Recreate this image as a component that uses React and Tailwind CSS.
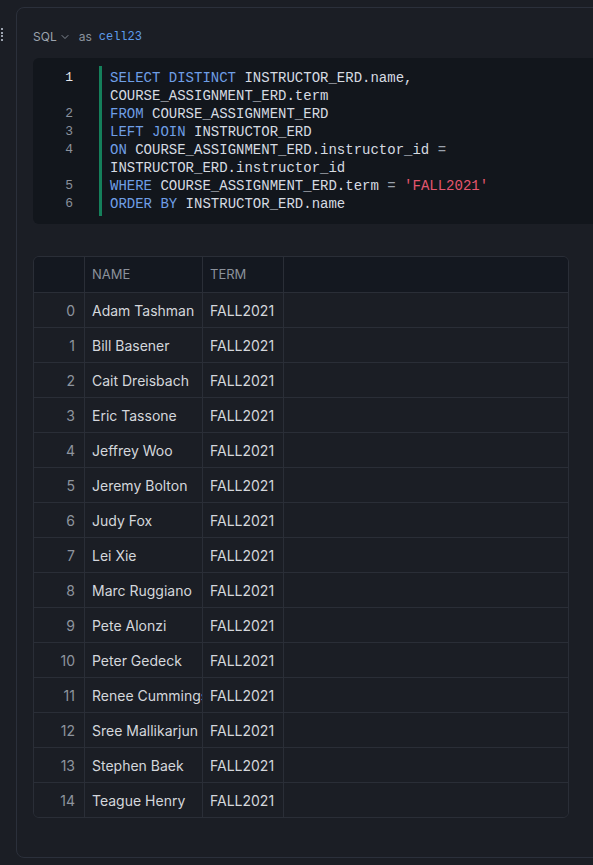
import { ChevronDown } from 'lucide-react'

const ROWS = [
  'Adam Tashman', 'Bill Basener', 'Cait Dreisbach', 'Eric Tassone', 'Jeffrey Woo',
  'Jeremy Bolton', 'Judy Fox', 'Lei Xie', 'Marc Ruggiano', 'Pete Alonzi',
  'Peter Gedeck', 'Renee Cummings', 'Sree Mallikarjun', 'Stephen Baek', 'Teague Henry',
]

const K = ({ children }) => <span className="text-[#6f9fe6]">{children}</span>

// each entry is one visual line; num is shown only on the first line of a statement
const CODE = [
  { num: 1, body: <><K>SELECT DISTINCT</K> INSTRUCTOR_ERD.name,</> },
  { num: null, body: <>COURSE_ASSIGNMENT_ERD.term</> },
  { num: 2, body: <><K>FROM</K> COURSE_ASSIGNMENT_ERD</> },
  { num: 3, body: <><K>LEFT JOIN</K> INSTRUCTOR_ERD</> },
  { num: 4, body: <><K>ON</K> COURSE_ASSIGNMENT_ERD.instructor_id <span className="text-[#9aa2ad]">=</span></> },
  { num: null, body: <>INSTRUCTOR_ERD.instructor_id</> },
  { num: 5, body: <><K>WHERE</K> COURSE_ASSIGNMENT_ERD.term <span className="text-[#9aa2ad]">=</span> <span className="text-[#e5566f]">'FALL2021'</span></> },
  { num: 6, body: <><K>ORDER BY</K> INSTRUCTOR_ERD.name</> },
]

const sans = { fontFamily: 'Inter, "Noto Sans", sans-serif' }
const mono = { fontFamily: '"Liberation Mono", "DejaVu Sans Mono", monospace' }

export default function App() {
  return (
    <div className="w-full h-[865px] bg-[#1b1e25] overflow-hidden relative" style={sans}>
      {/* drag handle */}
      <div className="absolute left-[1px] top-[28px] flex flex-col gap-[1.5px]">
        {[0, 1, 2, 3].map((i) => (
          <div key={i} className="w-[2px] h-[2px] bg-[#9ca3af]" />
        ))}
      </div>

      <div className="pt-[7px] pl-[16px]">
        <div className="w-[600px] h-[851px] border border-[#2b303b] rounded-lg pl-[16px] pt-[20px]">

          {/* Header */}
          <div className="flex items-center h-[18px] text-[12px]">
            <span className="text-[#9ba2ad]">SQL</span>
            <ChevronDown className="w-[12px] h-[12px] text-[#9ba2ad] ml-[2px]" strokeWidth={1.6} />
            <span className="text-[#8a919c] ml-[8px]">as</span>
            <span className="text-[#5d9cec] ml-[7px]" style={mono}>cell23</span>
          </div>

          {/* Code */}
          <div className="mt-[12px] bg-[#12161c] rounded-l-md py-[8px] flex text-[14px] leading-[18px]" style={mono}>
            <div className="w-[40px] pt-[3px] flex flex-col text-[13px] text-right">
              {CODE.map((l, i) => (
                <div key={i} className={`h-[18px] ${l.num === 1 ? 'text-[#e6e8ec]' : 'text-[#8a919c]'}`}>
                  {l.num ?? ''}
                </div>
              ))}
            </div>
            <div className="ml-[26px] border-l-[3px] border-[#15805b] pl-[8px] py-[3px] text-[#d6dbe2] whitespace-pre">
              {CODE.map((l, i) => (
                <div key={i} className="h-[18px]">{l.body}</div>
              ))}
            </div>
          </div>

          {/* Table */}
          <div className="mt-[32px] w-[536px] border border-[#2a2e37] rounded-md overflow-hidden text-[14px]">
            <div className="grid grid-cols-[51px_118px_81px_1fr] h-[35px] bg-[#141820] text-[13px] text-[#8b919b]">
              <div className="border-r border-[#2a2e37]" />
              <div className="border-r border-[#2a2e37] px-[7px] flex items-center">NAME</div>
              <div className="border-r border-[#2a2e37] px-[7px] flex items-center">TERM</div>
              <div />
            </div>
            {ROWS.map((name, i) => (
              <div key={name} className="grid grid-cols-[51px_118px_81px_1fr] h-[35px] border-t border-[#2a2e37] bg-[#1b1e25]">
                <div className="border-r border-[#2a2e37] pr-[9px] flex items-center justify-end text-[#8e949e]">{i}</div>
                <div className="border-r border-[#2a2e37] pl-[7px] flex items-center text-[#d4d7dc] overflow-hidden whitespace-nowrap">{name}</div>
                <div className="border-r border-[#2a2e37] pl-[7px] flex items-center text-[#d4d7dc]">FALL2021</div>
                <div />
              </div>
            ))}
          </div>

        </div>
      </div>
    </div>
  )
}
